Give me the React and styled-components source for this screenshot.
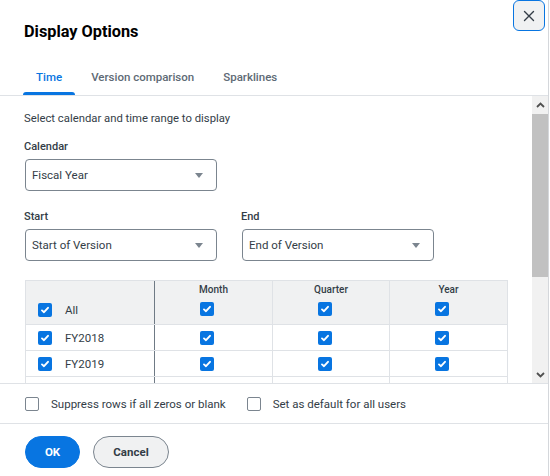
import React from 'react';
import styled, { createGlobalStyle } from 'styled-components';

const Global = createGlobalStyle`
  html, body { margin: 0; padding: 0; background: #fff; }
  body { font-family: Roboto, "Liberation Sans", sans-serif; color: #333d47; }
  * { box-sizing: border-box; }
`;

const Dialog = styled.div`
  position: relative;
  width: 549px;
  height: 476px;
  background: #fff;
  border-right: 1px solid #d4d7db;
  display: flex;
  flex-direction: column;
  overflow: hidden;
`;

const Header = styled.div`
  padding: 22px 24px 0;
  height: 58px;
  flex: none;
`;

const Title = styled.h2`
  margin: 0;
  font-size: 16.3px;
  line-height: 20px;
  font-weight: 700;
  color: #000;
`;

const CloseButton = styled.button`
  position: absolute;
  top: 0;
  right: 3px;
  width: 32px;
  height: 31px;
  border: 1px solid #0875e1;
  border-radius: 6px;
  background: #f0f1f2;
  display: flex;
  align-items: center;
  justify-content: center;
  padding: 0;
  color: #333d47;
`;

const TabList = styled.div`
  flex: none;
  display: flex;
  gap: 3px;
  padding-left: 23px;
  height: 38px;
  border-bottom: 1px solid #dfe2e6;
`;

const Tab = styled.div`
  position: relative;
  height: 37px;
  padding: 0 13px;
  display: flex;
  align-items: center;
  font-size: 11.5px;
  font-weight: 500;
  color: ${p => (p.$active ? '#0875e1' : '#5e6a75')};
  &::after {
    content: '';
    display: ${p => (p.$active ? 'block' : 'none')};
    position: absolute;
    left: 0;
    right: 0;
    bottom: 0;
    height: 3px;
    border-radius: 3px 3px 0 0;
    background: #0875e1;
  }
`;

const ScrollRegion = styled.div`
  flex: none;
  height: 287px;
  display: flex;
`;

const Viewport = styled.div`
  flex: 1;
  overflow: hidden;
`;

const Scrollbar = styled.div`
  flex: none;
  width: 16px;
  background: #f1f1f1;
  display: flex;
  flex-direction: column;
`;

const ScrollArrow = styled.div`
  flex: none;
  height: 17px;
  display: flex;
  align-items: center;
  justify-content: center;
  background: #f1f1f1;
`;

const Thumb = styled.div`
  flex: none;
  margin-top: 1px;
  height: 163px;
  background: #c1c1c1;
`;

const Track = styled.div`
  flex: 1;
`;

const Content = styled.div`
  padding: 15px 0 18px 25px;
  display: flex;
  flex-direction: column;
`;

const Intro = styled.p`
  margin: 0 0 0 -1px;
  font-size: 11.3px;
  line-height: 16px;
  color: #333d47;
`;

const FieldRow = styled.div`
  display: flex;
  gap: 25px;
  margin-top: ${p => p.$top}px;
`;

const Field = styled.div`
  display: flex;
  flex-direction: column;
  gap: 4px;
`;

const Label = styled.div`
  font-size: 11px;
  line-height: 16px;
  font-weight: 500;
  color: #333d47;
  margin-left: -1px;
`;

const Select = styled.div`
  width: 192px;
  height: 32px;
  border: 1px solid #7b858f;
  border-radius: 4px;
  display: flex;
  align-items: center;
  justify-content: space-between;
  padding: 0 13px 0 6px;
  font-size: 11.5px;
  color: #333d47;
`;

const Caret = styled.span`
  width: 0;
  height: 0;
  border-left: 4px solid transparent;
  border-right: 4px solid transparent;
  border-top: 5px solid #7b858f;
`;

const Table = styled.div`
  margin-top: 19px;
  width: 483px;
  border: 1px solid #dfe2e6;
  border-bottom: none;
`;

const Row = styled.div`
  display: grid;
  grid-template-columns: 129px 118px 117px 117px;
  height: ${p => (p.$head ? 44 : 26)}px;
  background: ${p => (p.$head ? '#f0f1f2' : '#fff')};
  border-bottom: 1px solid #dfe2e6;
`;

const FirstCell = styled.div`
  display: flex;
  align-items: ${p => (p.$head ? 'flex-end' : 'center')};
  gap: 13px;
  padding: 0 0 ${p => (p.$head ? 7 : 0)}px 12px;
  border-right: 1px solid #6f7a85;
  font-size: 11.5px;
  color: #333d47;
`;

const Cell = styled.div`
  display: flex;
  flex-direction: column;
  align-items: center;
  justify-content: ${p => (p.$head ? 'flex-start' : 'center')};
  gap: 5px;
  padding-top: ${p => (p.$head ? 2 : 0)}px;
  border-right: ${p => (p.$last ? 'none' : '1px solid #dfe2e6')};
`;

const CellCheck = styled.div`
  display: flex;
  padding-right: 13px;
`;

const ColHead = styled.div`
  font-size: 10px;
  line-height: 14px;
  font-weight: 500;
  color: #333d47;
`;

const Box = styled.span`
  width: 14px;
  height: 14px;
  flex: none;
  border-radius: 2px;
  background: ${p => (p.$checked ? '#0875e1' : '#fff')};
  border: ${p => (p.$checked ? 'none' : '1px solid #7b858f')};
  display: flex;
  align-items: center;
  justify-content: center;
`;

const Check = ({ checked = true }) => (
  <Box $checked={checked}>
    {checked && (
      <svg width="12" height="12" viewBox="0 0 12 12">
        <path d="M3 6.4 L5 8.2 L9 3.8" fill="none" stroke="#fff" strokeWidth="1.9" strokeLinecap="round" strokeLinejoin="round" />
      </svg>
    )}
  </Box>
);

const Chevron = ({ up }) => (
  <svg width="9" height="6" viewBox="0 0 9 6">
    <path d={up ? 'M1 5 L4.5 1.5 L8 5' : 'M1 1 L4.5 4.5 L8 1'} fill="none" stroke="#505050" strokeWidth="1.8" />
  </svg>
);

const OptionsBar = styled.div`
  flex: none;
  height: 41px;
  border-top: 1px solid #dfe2e6;
  border-bottom: 1px solid #dfe2e6;
  display: flex;
  align-items: center;
  gap: 21px;
  padding-left: 25px;
`;

const Option = styled.label`
  display: flex;
  align-items: center;
  gap: 12px;
  font-size: 11.5px;
  color: #333d47;
`;

const Footer = styled.div`
  flex: none;
  display: flex;
  gap: 13px;
  padding: 12px 0 0 25px;
`;

const Button = styled.button`
  height: 32px;
  width: ${p => (p.$primary ? 55 : 76)}px;
  padding: 0;
  border-radius: 16px;
  font-family: inherit;
  font-size: 11.5px;
  font-weight: 700;
  border: 1px solid ${p => (p.$primary ? '#0875e1' : '#7b858f')};
  background: ${p => (p.$primary ? '#0875e1' : '#f0f1f2')};
  color: ${p => (p.$primary ? '#fff' : '#333d47')};
`;

const years = ['FY2018', 'FY2019', 'FY2020', 'FY2021', 'FY2022', 'FY2023', 'FY2024', 'FY2025'];

export default function App() {
  return (
    <>
      <Global />
      <Dialog>
        <CloseButton aria-label="Close">
          <svg width="12" height="12" viewBox="0 0 12 12">
            <path d="M1.5 1.5 L10.5 10.5 M10.5 1.5 L1.5 10.5" stroke="#333d47" strokeWidth="1.4" strokeLinecap="round" />
          </svg>
        </CloseButton>
        <Header>
          <Title>Display Options</Title>
        </Header>
        <TabList>
          <Tab $active>Time</Tab>
          <Tab>Version comparison</Tab>
          <Tab>Sparklines</Tab>
        </TabList>
        <ScrollRegion>
          <Viewport>
            <Content>
              <Intro>Select calendar and time range to display</Intro>
              <FieldRow $top={12}>
                <Field>
                  <Label>Calendar</Label>
                  <Select>Fiscal Year<Caret /></Select>
                </Field>
              </FieldRow>
              <FieldRow $top={18}>
                <Field>
                  <Label>Start</Label>
                  <Select>Start of Version<Caret /></Select>
                </Field>
                <Field>
                  <Label>End</Label>
                  <Select>End of Version<Caret /></Select>
                </Field>
              </FieldRow>
              <Table>
                <Row $head>
                  <FirstCell $head><Check />All</FirstCell>
                  <Cell $head><ColHead>Month</ColHead><CellCheck><Check /></CellCheck></Cell>
                  <Cell $head><ColHead>Quarter</ColHead><CellCheck><Check /></CellCheck></Cell>
                  <Cell $head $last><ColHead>Year</ColHead><CellCheck><Check /></CellCheck></Cell>
                </Row>
                {years.map(y => (
                  <Row key={y}>
                    <FirstCell><Check />{y}</FirstCell>
                    <Cell><CellCheck><Check /></CellCheck></Cell>
                    <Cell><CellCheck><Check /></CellCheck></Cell>
                    <Cell $last><CellCheck><Check /></CellCheck></Cell>
                  </Row>
                ))}
              </Table>
            </Content>
          </Viewport>
          <Scrollbar aria-hidden="true">
            <ScrollArrow><Chevron up /></ScrollArrow>
            <Thumb />
            <Track />
            <ScrollArrow><Chevron /></ScrollArrow>
          </Scrollbar>
        </ScrollRegion>
        <OptionsBar>
          <Option><Check checked={false} />Suppress rows if all zeros or blank</Option>
          <Option><Check checked={false} />Set as default for all users</Option>
        </OptionsBar>
        <Footer>
          <Button $primary>OK</Button>
          <Button>Cancel</Button>
        </Footer>
      </Dialog>
    </>
  );
}
